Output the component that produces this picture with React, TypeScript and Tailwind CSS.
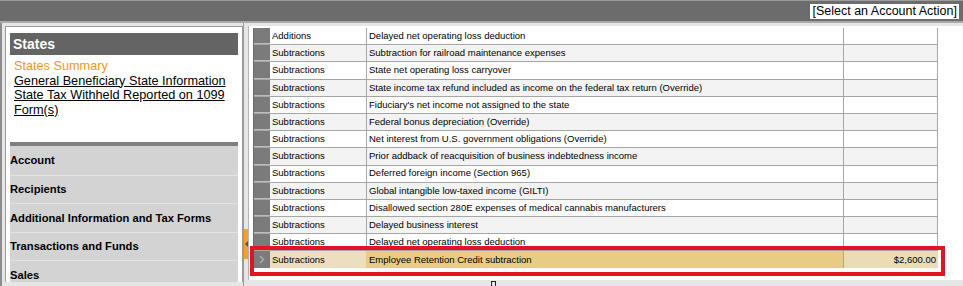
import React from "react";

const rows: [string, string, string][] = [
  ["Additions", "Delayed net operating loss deduction", ""],
  ["Subtractions", "Subtraction for railroad maintenance expenses", ""],
  ["Subtractions", "State net operating loss carryover", ""],
  ["Subtractions", "State income tax refund included as income on the federal tax return (Override)", ""],
  ["Subtractions", "Fiduciary's net income not assigned to the state", ""],
  ["Subtractions", "Federal bonus depreciation (Override)", ""],
  ["Subtractions", "Net interest from U.S. government obligations (Override)", ""],
  ["Subtractions", "Prior addback of reacquisition of business indebtedness income", ""],
  ["Subtractions", "Deferred foreign income (Section 965)", ""],
  ["Subtractions", "Global intangible low-taxed income (GILTI)", ""],
  ["Subtractions", "Disallowed section 280E expenses of medical cannabis manufacturers", ""],
  ["Subtractions", "Delayed business interest", ""],
  ["Subtractions", "Delayed net operating loss deduction", ""],
];

const nav = ["Account", "Recipients", "Additional Information and Tax Forms", "Transactions and Funds", "Sales"];

export default function App() {
  return (
    <div
      className="relative w-[963px] h-[286px] overflow-hidden bg-[#e6e6e6] text-black"
      style={{ fontFamily: '"Liberation Sans", Arial, sans-serif' }}
    >
      {/* top bar */}
      <div className="h-[23px] bg-[#6c6c6c] border-t border-[#9c9c9c] border-b-[2px] border-b-[#a9a9a9] flex items-center justify-end pr-[4px]">
        <div className="bg-white h-[15px] px-[2px] flex items-center text-[12.5px] leading-none">
          [Select an Account Action]
        </div>
      </div>

      <div className="flex h-[263px] border-l-2 border-[#8c8c8c]">
        {/* left panel */}
        <div className="ml-[3px] mt-[3px] w-[238px] h-[256px] overflow-hidden border border-b-0 border-[#9a9a9a] bg-white pl-[4px] pr-[4px] pt-[6px] flex flex-col">
          <div className="h-[22px] shrink-0 bg-[#646464] text-white font-bold text-[14px] flex items-center pl-[3px]">
            States
          </div>
          <div className="h-[87px] shrink-0 pl-[4px] pt-[4px] text-[12.7px] leading-[14.5px]">
            <div className="text-[#f7941d]">States Summary</div>
            <div className="underline">General Beneficiary State Information</div>
            <div className="underline">State Tax Withheld Reported on 1099 Form(s)</div>
          </div>
          <div className="shrink-0">
            <div className="h-[4px] bg-[#7f7f7f]" />
            <div className="bg-[#d3d3d3] pt-[1px]">
              {nav.map((n, i) => (
                <div
                  key={n}
                  className={`h-[28.6px] flex items-center font-bold text-[11.2px] ${i < nav.length - 1 ? "border-b border-[#e4e4e4]" : ""}`}
                >
                  {n}
                </div>
              ))}
            </div>
          </div>
        </div>

        {/* splitter */}
        <div className="w-[5px] relative border-l border-[#9a9a9a]">
          <div className="absolute left-0 top-[206px] w-[4px] h-[30px] bg-[#f7a21b] flex items-center justify-center">
            <div className="w-0 h-0 border-y-[3px] border-y-transparent border-r-[3px] border-r-[#555]" />
          </div>
        </div>

        {/* right panel */}
        <div className="flex-1 mt-[3px] h-[254px] bg-white border-l border-[#b5b5b5] pl-[4px] pt-[2px]">
          <div className="border-l border-[#6a6a6a] w-[685px]" style={{ fontSize: "9.5px" }}>
            {rows.map((r, i) => (
              <div key={i} className={`flex h-[17.2px] border-b border-[#a6a6a6] ${i % 2 === 1 ? "bg-[#f3f3f3]" : "bg-white"}`}>
                <div className="w-[16px] bg-[#7b7b7b] border-b border-[#bdbdbd]" />
                <div className="w-[97px] border-r border-[#a6a6a6] pl-[2px] flex items-center">{r[0]}</div>
                <div className="w-[477px] border-r border-[#a6a6a6] pl-[2px] flex items-center whitespace-nowrap">{r[1]}</div>
                <div className="w-[94px] border-r border-[#a6a6a6] flex items-center justify-end pr-[2px]">{r[2]}</div>
              </div>
            ))}
            <div className="flex h-[17px]">
              <div className="w-[16px] bg-[#7b7b7b] flex items-center justify-center">
                <svg width="6" height="9" viewBox="0 0 6 9">
                  <path d="M1 1 L4.5 4.5 L1 8" fill="none" stroke="#a9a9a9" strokeWidth="1.6" />
                </svg>
              </div>
              <div className="w-[97px] bg-[#ecdfbf] border-r border-[#e8cd85] pl-[2px] flex items-center">Subtractions</div>
              <div className="w-[477px] bg-[#e8cc84] border-r border-[#a6a6a6] pl-[2px] flex items-center">Employee Retention Credit subtraction</div>
              <div className="w-[94px] bg-[#ebdcb6] flex items-center justify-end pr-[2px]">$2,600.00</div>
            </div>
          </div>
        </div>
      </div>

      {/* annotation */}
      <div className="absolute left-[250px] top-[246px] w-[695px] h-[30px] border-[4px] border-[#e5131f]" />
      <div className="absolute left-[491px] top-[281px] w-[5px] h-[6px] border border-[#222]" />
    </div>
  );
}
